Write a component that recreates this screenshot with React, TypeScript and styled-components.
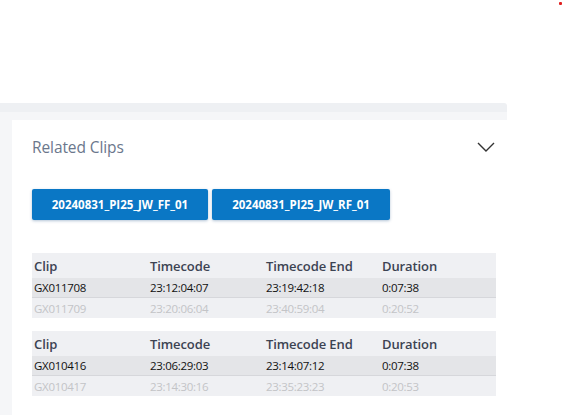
import React from "react";
import styled, { createGlobalStyle } from "styled-components";

const Global = createGlobalStyle`
  html, body { margin: 0; padding: 0; background: #ffffff; }
  body { font-family: "Open Sans", "Noto Sans", sans-serif; width: 564px; height: 415px; overflow: hidden; }
`;

const Page = styled.div`
  position: relative;
  width: 564px;
  height: 415px;
  padding-top: 103px;
  box-sizing: border-box;
`;

const Dot = styled.span`
  position: absolute;
  left: 559px;
  top: 2px;
  width: 3px;
  height: 3px;
  background: #e02020;
  border-radius: 1px;
`;

const Panel = styled.div`
  width: 507px;
  height: 312px;
  background: #f5f6f8;
  border-top: 9px solid #eef0f3;
  border-top-right-radius: 3px;
  box-sizing: border-box;
  padding: 8px 0 0 12px;
`;

const Card = styled.div`
  background: #ffffff;
  height: 100%;
  padding: 14px 12px 0 20px;
  box-sizing: border-box;
`;

const Header = styled.div`
  display: flex;
  align-items: center;
  justify-content: space-between;
  height: 26px;
`;

const Title = styled.h2`
  margin: 0;
  font-size: 15.5px;
  font-weight: 400;
  color: #6b778c;
  letter-spacing: -0.1px;
`;

const Chevron = styled.svg`
  width: 18px;
  height: 10px;
`;

const Buttons = styled.div`
  display: flex;
  gap: 4px;
  margin-top: 29px;
`;

const Button = styled.button<{ $w: number }>`
  width: ${(p) => p.$w}px;
  height: 31px;
  border: none;
  border-radius: 2px;
  background: #0a77c5;
  color: #ffffff;
  font-family: "Open Sans", "Noto Sans", sans-serif;
  font-size: 11.5px;
  font-weight: 700;
  box-shadow: 0 1px 3px rgba(0, 60, 120, 0.3);
  padding: 0;
`;

const Table = styled.div<{ $mt: number }>`
  width: 464px;
  margin-top: ${(p) => p.$mt}px;
  background: #eff0f3;
`;

const Row = styled.div<{ $kind: "head" | "main" | "dim" }>`
  display: grid;
  grid-template-columns: 116px 116px 116px 116px;
  align-items: center;
  padding-left: 2px;
  height: ${(p) => (p.$kind === "head" ? 25 : 20)}px;
  background: ${(p) => (p.$kind === "main" ? "#e4e5e8" : "#eff0f3")};
  border-bottom: ${(p) => (p.$kind === "main" ? "1px solid #d6d7db" : "none")};
  font-size: ${(p) => (p.$kind === "head" ? "13px" : "11.5px")};
  font-weight: ${(p) => (p.$kind === "head" ? 600 : 400)};
  color: ${(p) =>
    p.$kind === "head" ? "#3c4352" : p.$kind === "main" ? "#111111" : "#c3c4c7"};
  letter-spacing: ${(p) => (p.$kind === "head" ? "-0.1px" : "-0.3px")};
  box-sizing: border-box;
`;

const Cell = styled.span`
  white-space: nowrap;
`;

type Clip = { clip: string; tc: string; end: string; dur: string };

const groups: Clip[][] = [
  [
    { clip: "GX011708", tc: "23:12:04:07", end: "23:19:42:18", dur: "0:07:38" },
    { clip: "GX011709", tc: "23:20:06:04", end: "23:40:59:04", dur: "0:20:52" },
  ],
  [
    { clip: "GX010416", tc: "23:06:29:03", end: "23:14:07:12", dur: "0:07:38" },
    { clip: "GX010417", tc: "23:14:30:16", end: "23:35:23:23", dur: "0:20:53" },
  ],
];

export default function App() {
  return (
    <>
      <Global />
      <Page>
        <Dot />
        <Panel>
          <Card>
            <Header>
              <Title>Related Clips</Title>
              <Chevron viewBox="0 0 18 10">
                <path d="M1 1 L9 9 L17 1" fill="none" stroke="#333" strokeWidth="1.4" />
              </Chevron>
            </Header>
            <Buttons>
              <Button $w={176}>20240831_PI25_JW_FF_01</Button>
              <Button $w={178}>20240831_PI25_JW_RF_01</Button>
            </Buttons>
            {groups.map((g, i) => (
              <Table key={i} $mt={i === 0 ? 33 : 13}>
                <Row $kind="head">
                  <Cell>Clip</Cell>
                  <Cell>Timecode</Cell>
                  <Cell>Timecode End</Cell>
                  <Cell>Duration</Cell>
                </Row>
                {g.map((c, j) => (
                  <Row key={c.clip} $kind={j === 0 ? "main" : "dim"}>
                    <Cell>{c.clip}</Cell>
                    <Cell>{c.tc}</Cell>
                    <Cell>{c.end}</Cell>
                    <Cell>{c.dur}</Cell>
                  </Row>
                ))}
              </Table>
            ))}
          </Card>
        </Panel>
      </Page>
    </>
  );
}
